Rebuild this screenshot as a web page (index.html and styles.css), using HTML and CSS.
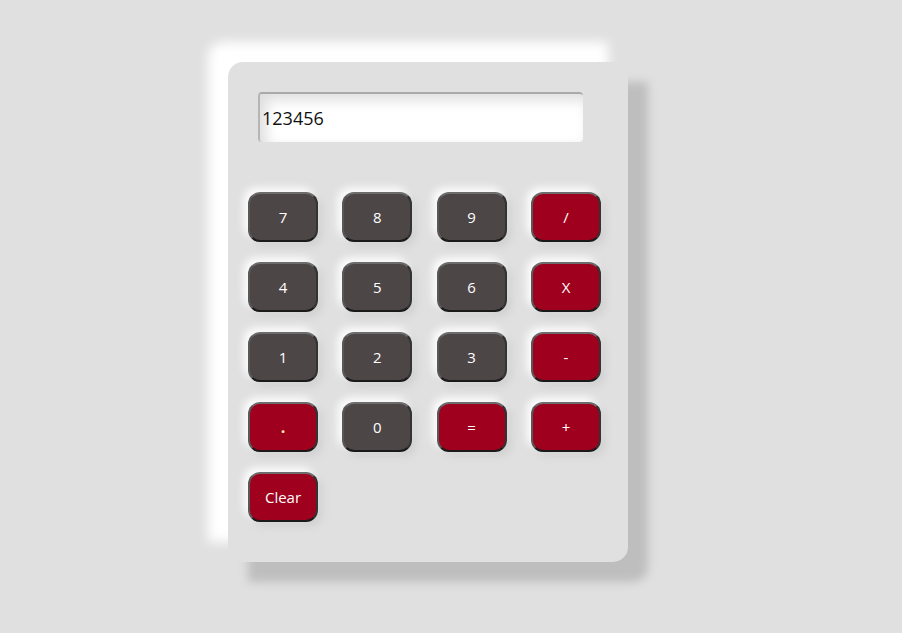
FILE: index.html
```html
<!DOCTYPE html>
<html>
<head>
<meta charset="utf-8">
<link rel="stylesheet" href="styles.css">
</head>
<body>
<div class="calc">
  <input class="display" type="text" value="123456">
  <div class="keys">
    <button class="key num">7</button>
    <button class="key num">8</button>
    <button class="key num">9</button>
    <button class="key op">/</button>
    <button class="key num">4</button>
    <button class="key num">5</button>
    <button class="key num">6</button>
    <button class="key op">X</button>
    <button class="key num">1</button>
    <button class="key num">2</button>
    <button class="key num">3</button>
    <button class="key op">-</button>
    <button class="key op dot">.</button>
    <button class="key num">0</button>
    <button class="key op">=</button>
    <button class="key op">+</button>
    <button class="key op">Clear</button>
  </div>
</div>
</body>
</html>
```
FILE: styles.css
```css
html, body {
  margin: 0;
  padding: 0;
  background: #e0e0e0;
  font-family: "Open Sans", "Noto Sans", sans-serif;
}
body {
  padding: 62px 0 0 228px;
  height: 633px;
  box-sizing: border-box;
}
.calc {
  width: 400px;
  height: 500px;
  box-sizing: border-box;
  background: #e0e0e0;
  border-radius: 15px 0 15px 0;
  box-shadow: -20px -20px 12px #ffffff, 20px 20px 10px #bebebe;
  padding: 30px 20px 0 20px;
}
.display {
  display: block;
  margin-left: 10px;
  width: 325px;
  height: 50px;
  box-sizing: border-box;
  border: none;
  border-top: 2px solid #a9a9a9;
  border-left: 2px solid #b5b5b5;
  border-radius: 4px;
  background: #ffffff;
  box-shadow: inset 6px 6px 14px #dedede;
  padding: 0 0 0 2px;
  font-family: "Open Sans", "Noto Sans", sans-serif;
  font-size: 18px;
  color: #111;
  outline: none;
}
.keys {
  margin-top: 50px;
  display: grid;
  grid-template-columns: repeat(4, 70px);
  column-gap: 24.33px;
  row-gap: 20px;
}
.key {
  width: 70px;
  height: 50px;
  box-sizing: border-box;
  border-radius: 12px;
  border: 2px solid;
  border-color: #6c6c6c #333333 #1a1a1a #585858;
  color: #ffffff;
  font-family: "Open Sans", "Noto Sans", sans-serif;
  font-size: 15px;
  padding: 0;
  box-shadow: -4px -4px 8px #ffffff, 4px 4px 8px #cfcfcf;
}
.num {
  background: #4d4646;
}
.op {
  background: #9e001d;
}
.dot {
  color: #ffe9a8;
  font-size: 16px;
  font-weight: bold;
}
```
